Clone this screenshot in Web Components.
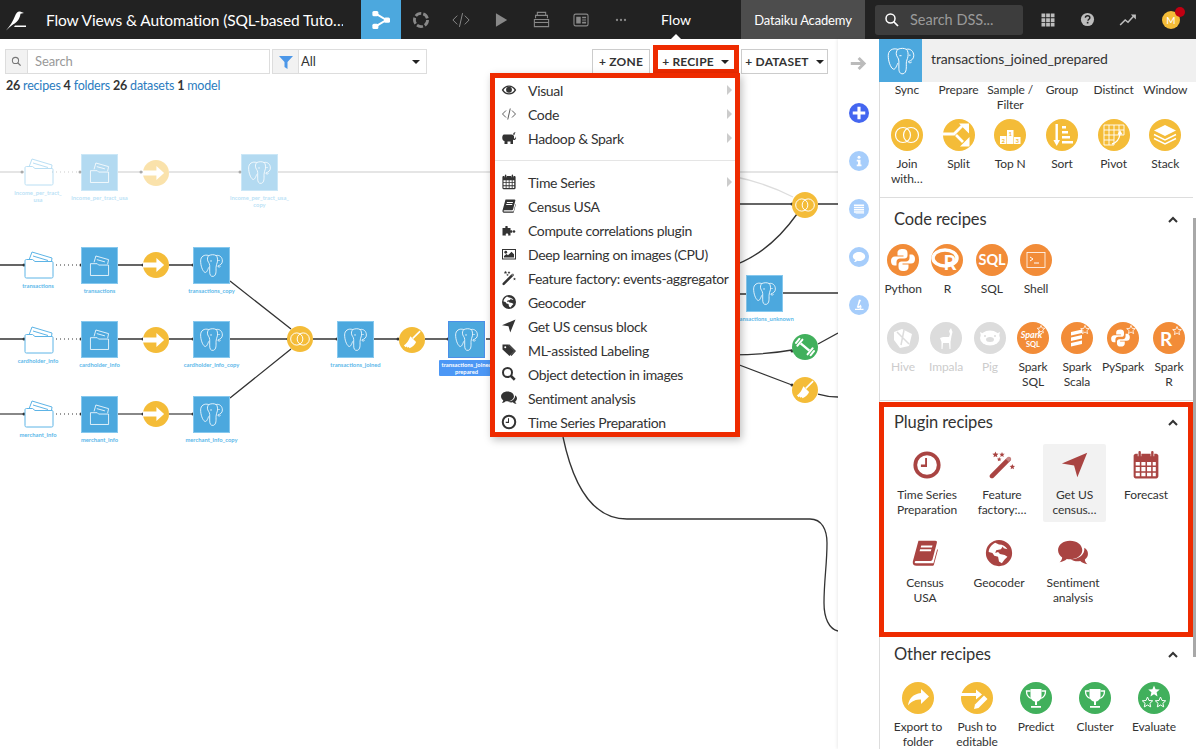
<!DOCTYPE html>
<html lang="en">
<head>
<meta charset="UTF-8">
<title>Flow Views & Automation</title>
<style>
  html, body { margin: 0; height: 100%; overflow: hidden; background: #fff; }
  body { font: 13px Lato, "Liberation Sans", sans-serif; color: #333; }
</style>
</head>
<body>
<dss-app>
  <dss-navbar slot="nav"></dss-navbar>
  <flow-view slot="flow">
    <flow-canvas>
      <flow-node kind="folder" x="24" y="157" label="income_per_tract_&#10;usa" faded></flow-node>
      <flow-node kind="dataset" icon="folder" x="81" y="154" label="income_per_tract_usa" faded></flow-node>
      <flow-node kind="recipe" icon="sync" bg="#f4bc38" x="143" y="160" faded></flow-node>
      <flow-node kind="dataset" icon="pg" x="241" y="154" label="income_per_tract_usa_&#10;copy" faded></flow-node>

      <flow-node kind="folder" x="24" y="250" label="transactions"></flow-node>
      <flow-node kind="dataset" icon="folder" x="81" y="247" label="transactions"></flow-node>
      <flow-node kind="recipe" icon="sync" bg="#f4bc38" x="143" y="252"></flow-node>
      <flow-node kind="dataset" icon="pg" x="193" y="247" label="transactions_copy"></flow-node>

      <flow-node kind="folder" x="24" y="325" label="cardholder_info"></flow-node>
      <flow-node kind="dataset" icon="folder" x="81" y="321" label="cardholder_info"></flow-node>
      <flow-node kind="recipe" icon="sync" bg="#f4bc38" x="143" y="327"></flow-node>
      <flow-node kind="dataset" icon="pg" x="193" y="321" label="cardholder_info_copy"></flow-node>

      <flow-node kind="folder" x="24" y="399" label="merchant_info"></flow-node>
      <flow-node kind="dataset" icon="folder" x="81" y="396" label="merchant_info"></flow-node>
      <flow-node kind="recipe" icon="sync" bg="#f4bc38" x="143" y="401"></flow-node>
      <flow-node kind="dataset" icon="pg" x="193" y="396" label="merchant_info_copy"></flow-node>

      <flow-node kind="recipe" icon="join" bg="#f4bc38" x="287" y="326"></flow-node>
      <flow-node kind="dataset" icon="pg" x="337" y="321" label="transactions_joined"></flow-node>
      <flow-node kind="recipe" icon="brush" bg="#f4bc38" x="399" y="327"></flow-node>
      <flow-node kind="dataset" icon="pg" x="448" y="321" label="transactions_joined_&#10;prepared" selected></flow-node>

      <flow-node kind="recipe" icon="join" bg="#f4bc38" x="792" y="192"></flow-node>
      <flow-node kind="dataset" icon="pg" x="746" y="275" label="transactions_unknown"></flow-node>
      <flow-node kind="recipe" icon="barbell" bg="#41b05c" x="792" y="334"></flow-node>
      <flow-node kind="recipe" icon="brush" bg="#f4bc38" x="792" y="377"></flow-node>
    </flow-canvas>

    <flow-toolbar></flow-toolbar>
    <flow-counts></flow-counts>

    <recipe-menu>
      <menu-item icon="eye" more>Visual</menu-item>
      <menu-item icon="code" more>Code</menu-item>
      <menu-item icon="elephant" more>Hadoop &amp; Spark</menu-item>
      <menu-sep></menu-sep>
      <menu-item icon="calendar" more>Time Series</menu-item>
      <menu-item icon="book">Census USA</menu-item>
      <menu-item icon="puzzle">Compute correlations plugin</menu-item>
      <menu-item icon="image">Deep learning on images (CPU)</menu-item>
      <menu-item icon="wand">Feature factory: events-aggregator</menu-item>
      <menu-item icon="globe">Geocoder</menu-item>
      <menu-item icon="nav">Get US census block</menu-item>
      <menu-item icon="tags">ML-assisted Labeling</menu-item>
      <menu-item icon="search">Object detection in images</menu-item>
      <menu-item icon="comments">Sentiment analysis</menu-item>
      <menu-item icon="clock">Time Series Preparation</menu-item>
    </recipe-menu>
  </flow-view>

  <side-rail slot="rail"></side-rail>

  <side-panel slot="panel" title="transactions_joined_prepared">
    <tile-row pad="1">
      <recipe-tile w="51.7">Sync</recipe-tile>
      <recipe-tile w="51.7">Prepare</recipe-tile>
      <recipe-tile w="51.7">Sample /<br>Filter</recipe-tile>
      <recipe-tile w="51.7">Group</recipe-tile>
      <recipe-tile w="51.7">Distinct</recipe-tile>
      <recipe-tile w="51.7">Window</recipe-tile>
    </tile-row>
    <tile-row pad="1" top="7" bottom="11">
      <recipe-tile w="51.7"><dss-icon slot="icon" name="join" bg="#f4bc38" size="32"></dss-icon>Join<br>with…</recipe-tile>
      <recipe-tile w="51.7"><dss-icon slot="icon" name="split" bg="#f4bc38" size="32"></dss-icon>Split</recipe-tile>
      <recipe-tile w="51.7"><dss-icon slot="icon" name="topn" bg="#f4bc38" size="32"></dss-icon>Top N</recipe-tile>
      <recipe-tile w="51.7"><dss-icon slot="icon" name="sort" bg="#f4bc38" size="32"></dss-icon>Sort</recipe-tile>
      <recipe-tile w="51.7"><dss-icon slot="icon" name="pivot" bg="#f4bc38" size="32"></dss-icon>Pivot</recipe-tile>
      <recipe-tile w="51.7"><dss-icon slot="icon" name="stack" bg="#f4bc38" size="32"></dss-icon>Stack</recipe-tile>
    </tile-row>

    <panel-section heading="Code recipes" gap="14">
      <tile-row pad="1">
        <recipe-tile w="44.3"><dss-icon slot="icon" name="python" bg="#f28c38" size="32"></dss-icon>Python</recipe-tile>
        <recipe-tile w="44.3"><dss-icon slot="icon" name="r" bg="#f28c38" size="32"></dss-icon>R</recipe-tile>
        <recipe-tile w="44.3"><dss-icon slot="icon" name="sql" bg="#f28c38" size="32"></dss-icon>SQL</recipe-tile>
        <recipe-tile w="44.3"><dss-icon slot="icon" name="shell" bg="#f28c38" size="32"></dss-icon>Shell</recipe-tile>
      </tile-row>
      <tile-row pad="1" top="26" bottom="11">
        <recipe-tile w="44" off><dss-icon slot="icon" name="hive" bg="#dcdcdc" size="32"></dss-icon>Hive</recipe-tile>
        <recipe-tile w="42" off><dss-icon slot="icon" name="impala" bg="#dcdcdc" size="32"></dss-icon>Impala</recipe-tile>
        <recipe-tile w="46" off><dss-icon slot="icon" name="pig" bg="#dcdcdc" size="32"></dss-icon>Pig</recipe-tile>
        <recipe-tile w="40"><dss-icon slot="icon" name="sparksql" bg="#f28c38" size="32"></dss-icon>Spark<br>SQL</recipe-tile>
        <recipe-tile w="48"><dss-icon slot="icon" name="scala" bg="#f28c38" size="32"></dss-icon>Spark<br>Scala</recipe-tile>
        <recipe-tile w="44"><dss-icon slot="icon" name="pyspark" bg="#f28c38" size="32"></dss-icon>PySpark</recipe-tile>
        <recipe-tile w="48"><dss-icon slot="icon" name="sparkr" bg="#f28c38" size="32"></dss-icon>Spark<br>R</recipe-tile>
      </tile-row>
    </panel-section>

    <panel-section heading="Plugin recipes" gap="11" framed>
      <tile-row pad="15.5">
        <recipe-tile w="63" plugin><dss-icon slot="icon" name="clock" color="#a94442" size="30"></dss-icon>Time Series<br>Preparation</recipe-tile>
        <recipe-tile w="63" ml="12" plugin><dss-icon slot="icon" name="wand" color="#a94442" size="30"></dss-icon>Feature<br>factory:…</recipe-tile>
        <recipe-tile w="63" ml="9.5" plugin hover><dss-icon slot="icon" name="nav" color="#a94442" size="30"></dss-icon>Get US<br>census…</recipe-tile>
        <recipe-tile w="63" ml="8.5" plugin><dss-icon slot="icon" name="calendar" color="#a94442" size="30"></dss-icon>Forecast</recipe-tile>
      </tile-row>
      <tile-row pad="13.5" top="10" bottom="22">
        <recipe-tile w="63" plugin><dss-icon slot="icon" name="book" color="#a94442" size="30"></dss-icon>Census<br>USA</recipe-tile>
        <recipe-tile w="63" ml="11" plugin><dss-icon slot="icon" name="globe" color="#a94442" size="30"></dss-icon>Geocoder</recipe-tile>
        <recipe-tile w="63" ml="11" plugin><dss-icon slot="icon" name="comments" color="#a94442" size="30"></dss-icon>Sentiment<br>analysis</recipe-tile>
      </tile-row>
    </panel-section>

    <panel-section heading="Other recipes" gap="17" borderless>
      <tile-row pad="8.5">
        <recipe-tile w="59"><dss-icon slot="icon" name="export" bg="#f4bc38" size="32"></dss-icon>Export to<br>folder</recipe-tile>
        <recipe-tile w="59"><dss-icon slot="icon" name="push" bg="#f4bc38" size="32"></dss-icon>Push to<br>editable</recipe-tile>
        <recipe-tile w="59"><dss-icon slot="icon" name="trophy" bg="#41b05c" size="32"></dss-icon>Predict</recipe-tile>
        <recipe-tile w="59"><dss-icon slot="icon" name="trophy" bg="#41b05c" size="32"></dss-icon>Cluster</recipe-tile>
        <recipe-tile w="59"><dss-icon slot="icon" name="evaluate" bg="#41b05c" size="32"></dss-icon>Evaluate</recipe-tile>
      </tile-row>
    </panel-section>
  </side-panel>
</dss-app>

<script>
  // all glyphs live on a 32x32 box and paint with currentColor
  const star = (cx, cy, r) => {
    let pts = [];
    for (let i = 0; i < 10; i++) {
      const a = -Math.PI / 2 + i * Math.PI / 5, d = i % 2 ? r * 0.45 : r;
      pts.push((cx + d * Math.cos(a)).toFixed(1) + "," + (cy + d * Math.sin(a)).toFixed(1));
    }
    return pts.join(" ");
  };
  const grow = inner => `<g transform="translate(16 16) scale(1.1) translate(-16 -16)">${inner}</g>`;
  const snake = `M16 5c-4 0-5.500 1.500-5.500 4v2.500h6v1H8C5.500 12.500 4 14 4 17s1.500 4.500 3.500 4.500h2V18c0-2 1.500-3.500 3.500-3.500h4.500c1.700 0 3-1.300 3-3V9c0-2.500-1.500-4-4.500-4z`;
  const python = `<path d="${snake}"/><path d="${snake}" transform="rotate(180 16 16)"/>`;
  const trophy = `<path d="M10.500 7h11v7c0 3.500-2.500 5.500-5.500 5.500s-5.500-2-5.500-5.500z"/><path d="M10.500 9H6.500c0 4 1.500 6.500 5 7.500M21.500 9h4c0 4-1.500 6.500-5 7.500" fill="none" stroke="currentColor" stroke-width="1.300"/><path d="M15 19h2v4h-2zM11 24h10v1.800H11z"/>`;
  const brush = `<path d="M17 14L26 5" stroke="currentColor" stroke-width="2" fill="none"/><path d="M14 11.500l7 7c-1 3-4 6-8 7.500l-1-1.500-1.500 1-1-1.500-1.500 1L6 22.500c3-1 6-6 8-11z"/>`;

  const ICONS = {
    pg: `<g fill="none" stroke="currentColor" stroke-width=".9" stroke-linejoin="round"><path d="M13 5C8 3.500 4 6 4 11c0 5 2 11 4.500 12.500 2 1 3-2 4.500-5.500"/><path d="M13 5c3-1.200 6-1.200 8 0 1.500 1 2 4 1.500 7-.5 2.500-1.500 3.500-1.500 6 0 4 .5 9-3 10-3 .5-4-2-4-5v-7c0-3-2.500-4-2.500-7 0-2 1-3.500 1.500-4"/><path d="M21 5c4-1 7 2 7 6 0 3-2 4.500-5 5.500 0 1.500 2 1.500 3 .5"/><path d="M14.500 11h2M23.500 10.500h1.500"/></g>`,
    folder: `<g fill="none" stroke="currentColor" stroke-width=".9" stroke-linejoin="round"><path d="M6 14h7.500l1.500 1.500h11v11.500H6z"/><path d="M10 12.500l2-7 14 4-1 5M13 9.500l9 2.500"/></g>`,
    sync: `<path d="M0 13h16.500V7.500L26 16l-9.500 8.500V19H0z"/>`,
    join: `<g fill="none" stroke="currentColor" stroke-width="1.200"><circle cx="12" cy="16" r="7.500"/><circle cx="20" cy="16" r="7.500"/></g>`,
    brush,
    barbell: `<g transform="rotate(40 16 16)"><path d="M9 14.500h14v3H9z"/><rect x="6.500" y="10" width="2.500" height="12" rx="1"/><rect x="3" y="11.500" width="2.500" height="9" rx="1"/><rect x="23" y="10" width="2.500" height="12" rx="1"/><rect x="26.500" y="11.500" width="2.500" height="9" rx="1"/></g>`,
    split: `<g fill="none" stroke="currentColor" stroke-width="2.800"><path d="M0 15h11l8-8M13 16l7 7"/></g><path d="M16 4.500h10v10zM17 27.500h9.500v-9.500z"/>`,
    topn: `<path d="M6 17h6.500v8H6zM13 11h6.500v14H13zM20 18h6.500v7H20z"/><g fill="#f4bc38" font-size="6" font-weight="700" font-family="Lato,sans-serif" text-anchor="middle"><text x="9.200" y="23.500">2</text><text x="16.200" y="17">1</text><text x="23.200" y="24">3</text></g>`,
    sort: `<path d="M9.500 5h2.400v16H14l-3.300 6-3.300-6h2.100zM16 7h4v2.500h-4zM16 12h6v2.500h-6zM16 17h8v2.500h-8zM16 22h11v2.500H16z"/>`,
    pivot: `<g fill="none" stroke="currentColor" stroke-width=".9"><path d="M6 6h20v10H16v10H6zM6 11h20M6 16h10M6 21h10M11 6v20M16 6v10M21 6v10"/></g><path d="M14 25c4-1 7-4 8-10" fill="none" stroke="currentColor" stroke-width="1.300"/><path d="M22 11l2.500 4.500h-5z"/>`,
    stack: `<path d="M16 6l11 5.500-11 5.500-11-5.500z"/><path d="M5 15.500l11 5.500 11-5.500M5 19.500l11 5.500 11-5.500" fill="none" stroke="currentColor" stroke-width="1.500"/>`,
    python,
    r: `<ellipse cx="14" cy="14" rx="12" ry="8" fill="none" stroke="currentColor" stroke-width="3.500"/><text x="19" y="26" font-size="20" font-weight="700" text-anchor="middle" font-family="Lato,sans-serif">R</text>`,
    sql: `<text x="16" y="21" font-size="14.500" font-weight="700" text-anchor="middle" font-family="Lato,sans-serif">SQL</text>`,
    shell: `<rect x="7" y="8.500" width="18" height="15" fill="none" stroke="currentColor" stroke-width=".8"/><path d="M10 13l3 2-3 2M14 19h5" fill="none" stroke="currentColor" stroke-width="1"/>`,
    hive: `<path d="M7 10l8-3 10 5-3 12-9 2-6-8z"/><path d="M10 10l12 12M17 8l-3 15" stroke="#dcdcdc" stroke-width="1.500" fill="none"/>`,
    impala: `<path d="M21 6l1.500 4-1 4-1 6 0 7h-1l-.5-6h-6l-.5 6h-1l0-7-1.500-4 3-1h6l1-3-1-3z"/>`,
    pig: `<ellipse cx="16" cy="16" rx="10" ry="7.500"/><path d="M6 10l4 2-3 2zM26 10l-4 2 3 2z"/><ellipse cx="16" cy="17.500" rx="4" ry="2.500" fill="#dcdcdc"/><circle cx="11" cy="14" r="1" fill="#dcdcdc"/><circle cx="21" cy="14" r="1" fill="#dcdcdc"/>`,
    sparksql: `<text x="14.500" y="15.500" font-size="9" font-style="italic" font-weight="700" text-anchor="middle" font-family="Lato,sans-serif">Spark</text><text x="16" y="25" font-size="7.500" font-weight="700" text-anchor="middle" font-family="Lato,sans-serif">SQL</text><polygon points="${star(24, 7.5, 4)}" fill="none" stroke="currentColor" stroke-width=".8"/>`,
    scala: `<path d="M10 10l11-2.500v3.500l-11 2.500zM10 15.500l11-2.500v3.500l-11 2.500zM10 21l11-2.500V22l-11 2.500z"/><polygon points="${star(24, 8, 4.500)}" fill="none" stroke="currentColor" stroke-width=".8"/>`,
    pyspark: `<g transform="translate(1 3.500) scale(.78)">${python}</g><polygon points="${star(24, 8, 4.500)}" fill="none" stroke="currentColor" stroke-width=".8"/>`,
    sparkr: `<text x="13" y="24" font-size="19" font-weight="700" text-anchor="middle" font-family="Lato,sans-serif">R</text><polygon points="${star(24, 9, 4.500)}" fill="none" stroke="currentColor" stroke-width=".8"/>`,
    export: `<path d="M19 7l8 7.500-8 7.500v-4.500c-5 0-9 1-13 6 1-7 5-11.500 13-12.500z"/>`,
    push: `<path d="M0 11h15V7.500l6 5-6 5V14H0z"/><path d="M23 13.500l3.500 3.500-9 9-4.500 1 1-4.500z"/>`,
    trophy,
    evaluate: `<polygon points="${star(16, 9.500, 6)}"/><polygon points="${star(9.500, 20.500, 5.500)}" fill="none" stroke="currentColor" stroke-width="1"/><polygon points="${star(22.500, 20.500, 5.500)}" fill="none" stroke="currentColor" stroke-width="1"/>`,
    // navbar
    flow: `<path d="M9 7.500l14 8.500-14 8.500" fill="none" stroke="currentColor" stroke-width="2.600"/><rect x="4.500" y="4" width="8" height="7" rx="2"/><rect x="4.500" y="21" width="8" height="7" rx="2"/><rect x="20" y="12.500" width="8" height="7" rx="2"/>`,
    ring: `<circle cx="16" cy="16" r="10.500" fill="none" stroke="currentColor" stroke-width="4.500" stroke-dasharray="10 3.200"/>`,
    code: `<path d="M10 9l-7 7 7 7M22 9l7 7-7 7M18.500 5l-5 22" fill="none" stroke="currentColor" stroke-width="1.600"/>`,
    play: `<path d="M7 4l20 12-20 12z"/>`,
    jobs: `<g fill="none" stroke="currentColor" stroke-width="1.800"><path d="M9 8V4h14v4M6 14V9h20v5M4 28V16h24v12z"/><path d="M4 21h24"/></g>`,
    card: `<rect x="3.500" y="5.500" width="25" height="21" rx="3" fill="none" stroke="currentColor" stroke-width="2"/><path d="M7.500 10h8v12h-8zM18 10h7v3h-7zM18 15h7v2h-7zM18 19h7v3h-7z"/>`,
    dots: `<circle cx="8" cy="16" r="2.300"/><circle cx="16" cy="16" r="2.300"/><circle cx="24" cy="16" r="2.300"/>`,
    loupe: `<circle cx="13" cy="13" r="9" fill="none" stroke="currentColor" stroke-width="3"/><path d="M19.500 19.500L28 28" stroke="currentColor" stroke-width="3.500"/>`,
    grid: `<path d="M3 3h7.500v7.500H3zM12.300 3h7.500v7.500h-7.500zM21.500 3H29v7.500h-7.500zM3 12.300h7.500v7.500H3zM12.300 12.300h7.500v7.500h-7.500zM21.500 12.300H29v7.500h-7.500zM3 21.500h7.500V29H3zM12.300 21.500h7.500V29h-7.500zM21.500 21.500H29V29h-7.500z"/>`,
    help: `<circle cx="16" cy="16" r="14"/><path d="M11.500 12.500c0-3 2-4.500 4.800-4.500 3 0 4.700 1.800 4.700 4 0 3.500-4 3.500-4 6.500" fill="none" stroke="#222" stroke-width="3"/><rect x="14.500" y="21" width="3.500" height="3.500" fill="#222"/>`,
    trend: `<path d="M2 25l9-9 5 4 11-12" fill="none" stroke="currentColor" stroke-width="2.800"/><path d="M21 6h9v9z"/>`,
    arrow: `<path d="M18 5l11 11-11 11-3.500-3.500 5-5H3v-5h16.500l-5-5z"/>`,
    plus: `<path d="M13.500 6h5v7.500H26v5h-7.500V26h-5v-7.500H6v-5h7.500z"/>`,
    info: `<circle cx="16" cy="8.500" r="3"/><path d="M11.500 13.500h7.500V23h2v3.500H11.500V23h2.500v-6h-2.500z"/>`,
    list: `<path d="M7 8h18v2.500H7zM7 12h18v2.500H7zM7 16h18v2.500H7zM7 20h18v2.500H7zM10 24h15v1H10z"/>`,
    bubble: `<path d="M16 7c6 0 11 3.500 11 8s-5 8-11 8c-1 0-2 0-3-.3-1.500 1.300-3.500 2.300-6 2.300 1.500-1.300 2.300-2.700 2.500-4C7 19.500 5 17.500 5 15c0-4.500 5-8 11-8z"/>`,
    flask: `<path d="M16 5l4 1-5 12c2 .5 3-1 3.500-3 3 2 3.500 6 1 8.500H25V26H8v-2.500h8c2.500 0 3-1.500 2.500-3-2 1.500-5 2-6.500.5-1-1 0-2 .5-3z"/>`,
    // menu and plugin glyphs
    eye: `<path fill-rule="evenodd" d="M1.500 16C5 10 10 7 16 7s11 3 14.500 9C27 22 22 25 16 25S5 22 1.500 16zm3.500 0c3 4.300 6.500 6.500 11 6.500S24 20.300 27 16c-3-4.300-6.500-6.500-11-6.500S8 11.700 5 16z"/><circle cx="16" cy="15.500" r="5.800"/>`,
    elephant: `<path d="M6 9h15c3 0 5 2 5 4v3c0 2 2 2 3 0 .5-1-.5-2 0-3 1 1 1.500 2.500 1 4-1 3-4 4-6 2v9h-5v-5h-6v5H7v-6C4 22 2.500 19 2.500 15 2.500 12 4 9.500 6 9z"/><path d="M24 9c1-3 3-5 5-4-1 1-2 2-2 5z"/>`,
    calendar: grow(`<path fill-rule="evenodd" d="M4 7c0-1 1-2 2-2h2v2.500h3.500V5h9v2.500H24V5h2c1 0 2 1 2 2v20c0 1-1 2-2 2H6c-1 0-2-1-2-2zm2 6v3.500h4V13zm5.500 0v3.500h4V13zm5.500 0v3.500h4V13zm5.500 0v3.500h3V13zM6 18v4h4v-4zm5.500 0v4h4v-4zm5.500 0v4h4v-4zm5.500 0v4h3v-4zM6 23.500V27h4v-3.500zm5.500 0V27h4v-3.500zm5.500 0V27h4v-3.500zm5.500 0V27h3v-3.500z"/><rect x="8.700" y="2.500" width="2.300" height="6.500" rx="1"/><rect x="21" y="2.500" width="2.300" height="6.500" rx="1"/>`),
    book: `<path fill-rule="evenodd" d="M9 3h18c1.500 0 2 1 1.600 2.300L24 23c-.4 1-1 1.500-2 1.500H7c-1.300 0-2 .5-2 1.300S5.700 27 7 27h18l4-15 .8.500-4.300 16c-.2.800-.8 1.200-1.500 1.200H7c-3 0-4.500-2-4-4.700zm3 5l-.6 2h12l.6-2zm-1.200 4l-.6 2h12l.6-2z"/>`,
    puzzle: `<path d="M3 12h6c-1-1.500-1-4 2-4s3 2.500 2 4h6v5c1.500-1 4-1 4 2s-2.500 3-4 2v6h-5c1-1.500 1-4-2-4s-3 2.500-2 4H3z"/><circle cx="26" cy="19" r="2.500"/>`,
    image: `<path fill-rule="evenodd" d="M2 6h28v21H2zm2 2v17h24V8z"/><circle cx="9.500" cy="12.500" r="2.800"/><path d="M6 23v-3l5-4 3 2.500 7-7 5 5V23z"/>`,
    wand: `<path d="M3.500 26l18-18c1-1 2.500-1 3.500 0s1 2.500 0 3.500l-18 18c-1 1-2.500 1-3.500 0s-1-2.500 0-3.500z"/><path d="M20 9.500l3-3 3 3-3 3z" fill="#fff" opacity=".35"/><polygon points="${star(9, 5, 3.500)}"/><polygon points="${star(16, 5, 3)}"/><polygon points="${star(27, 18, 3)}"/><polygon points="${star(13, 10, 2.500)}"/>`,
    globe: `<path fill-rule="evenodd" d="M16 2a14 14 0 1 1 0 28 14 14 0 0 1 0-28zm-4 3C8 7 5 11 5 15l4 1 2 3 4 1 1 5 3 2 3-4 3-3-3-2-5-1-2-2-3 1 1-3 5-1 2-3 1 2 4 1c-2-3-5-5-9-5z"/>`,
    nav: `<path d="M29 3L2 14.500l13 2L18.500 29z"/>`,
    tags: `<path d="M3 5h11l13 13-10 10L3 15z"/><circle cx="8.500" cy="10.500" r="2" fill="#fff"/><path d="M17 5l13 13-9 10-2-2 8-8L14 5z"/>`,
    search: `<circle cx="13" cy="13" r="9" fill="none" stroke="currentColor" stroke-width="4"/><path d="M19.500 19.500L27.500 27.500" stroke="currentColor" stroke-width="5"/>`,
    comments: grow(`<path d="M13 4c7 0 12 4 12 9s-5 9-12 9c-1 0-2 0-3-.2C8 23.500 6 24.500 3 25c1.500-1.500 2.500-3 2.500-4.700C3 18.500 1.500 16 1.500 13 1.500 8 6.500 4 13 4z"/><path d="M27 11c2.500 1.500 3.500 3.500 3.500 6 0 2-1 4-3 5.300 0 1.700 1 3.200 2.500 4.700-3-.5-5-1.500-7-3.200-3.500.7-7-.2-9.500-1.800 8 .5 14-4 13.500-11z"/>`),
    clock: `<circle cx="16" cy="16" r="12.500" fill="none" stroke="currentColor" stroke-width="4"/><path d="M16 8.500V18h-6.500v-2.500H14V8.500z"/>`
  };

  const define = (name, css, html) => {
    customElements.define(name, class extends HTMLElement {
      connectedCallback() {
        if (this.shadowRoot) return;
        const root = this.attachShadow({ mode: "open" });
        const body = typeof html == "function" ? html(this) : html;
        const style = typeof css == "function" ? css(this) : css;
        root.innerHTML = `<style>${style}</style>${body}`;
      }
    });
  };
  const attr = (el, name, dflt) => el.hasAttribute(name) ? el.getAttribute(name) : dflt;

  define("dss-icon",
    el => `:host{display:block;flex:none;width:${attr(el, "size", 16)}px;height:${attr(el, "size", 16)}px;color:${attr(el, "color", attr(el, "bg", "") ? "#fff" : "currentColor")}}
           svg{display:block;width:100%;height:100%;fill:currentColor;overflow:hidden}`,
    el => `<svg viewBox="0 0 32 32">${el.hasAttribute("bg") ? `<circle cx="16" cy="16" r="16" fill="${el.getAttribute("bg")}"/>` : ""}${ICONS[el.getAttribute("name")] || ""}</svg>`);

  define("dss-app",
    `:host{display:grid;grid-template:39px 710px / 838px 41px 317px;width:1196px;height:749px;overflow:hidden}
     ::slotted([slot=nav]){grid-column:1 / -1}`,
    `<slot name="nav"></slot><slot name="flow"></slot><slot name="rail"></slot><slot name="panel"></slot>`);

  define("dss-navbar",
    `:host{display:flex;align-items:center;height:39px;background:#222;color:#fff}
     .logo{width:46px;display:flex;justify-content:flex-start;padding-left:5px;box-sizing:border-box}
     .title{width:297px;margin-right:18px;font-size:15.500px;white-space:nowrap;overflow:hidden;letter-spacing:-.12px}
     .tab{width:40px;height:39px;display:flex;align-items:center;justify-content:center;color:#888}
     .tab.on{background:#4ca8de;color:#fff}
     .flow{width:70px;height:39px;display:flex;align-items:center;justify-content:center;font-size:14px;position:relative}
     .flow::after{content:"";position:absolute;left:30px;bottom:0;border:5px solid transparent;border-top:0;border-bottom-color:#fff}
     .academy{margin-left:30px;width:124px;height:39px;background:#4d4d4d;display:flex;align-items:center;justify-content:center;font-size:13px;letter-spacing:-.15px}
     .search{margin-left:10px;width:148px;height:30px;background:#3d3d3d;border-radius:3px;display:flex;align-items:center;gap:10px;padding-left:9px;box-sizing:border-box;color:#fff;font-size:14.500px}
     .search span{color:#9a9a9a}
     .right{display:flex;align-items:center;color:#bdbdbd}
     .avatar{position:relative;width:18px;height:18px;border-radius:50%;background:#f4bc38;margin-left:25px;color:#fff;font-size:10px;display:flex;align-items:center;justify-content:center}
     .avatar::after{content:"";position:absolute;width:10px;height:10px;border-radius:50%;background:#c00012;top:-4px;right:-5px}`,
    `<div class="logo"><svg width="24" height="24" viewBox="0 0 24 24" fill="#fff"><path d="M1 22.500C5 18 8 13 10 8c1-3 3-5 5-4.500l4 1.500-3.500.8C15 10 13 14 8 16.500 6 18 3 20.500 1 22.500z"/><path d="M10 17.500h11V19H9z"/></svg></div>
     <div class="title">Flow Views &amp; Automation (SQL-based Tuto…</div>
     <div class="tab on"><dss-icon name="flow" size="24"></dss-icon></div>
     <div class="tab"><dss-icon name="ring" size="20"></dss-icon></div>
     <div class="tab"><dss-icon name="code" size="20"></dss-icon></div>
     <div class="tab"><dss-icon name="play" size="18"></dss-icon></div>
     <div class="tab"><dss-icon name="jobs" size="19"></dss-icon></div>
     <div class="tab"><dss-icon name="card" size="18"></dss-icon></div>
     <div class="tab"><dss-icon name="dots" size="16"></dss-icon></div>
     <div class="flow">Flow</div>
     <div class="academy">Dataiku Academy</div>
     <div class="search"><dss-icon name="loupe" size="16"></dss-icon><span>Search DSS...</span></div>
     <div class="right">
       <dss-icon name="grid" size="16" style="margin-left:17px"></dss-icon>
       <dss-icon name="help" size="15" style="margin-left:24px"></dss-icon>
       <dss-icon name="trend" size="18" style="margin-left:24px"></dss-icon>
       <div class="avatar">M</div>
     </div>`);

  define("flow-view",
    `:host{display:block;position:relative;overflow:hidden;background:#fff}`,
    `<slot></slot>`);

  define("flow-toolbar",
    `:host{display:flex;position:relative;align-items:center;padding:10px 10px 0 5px;height:25px;font-size:13px}
     .grp{display:flex;height:25px;box-sizing:border-box;border:1px solid #ddd;background:#fff}
     .add{width:21px;background:#f2f2f2;border-right:1px solid #ddd;display:flex;align-items:center;justify-content:center;flex:none}
     .grp.a{width:265px}
     .grp.b{width:155px;margin-left:2px}
     .grp.b .add{width:25px}
     .val{flex:1;padding-left:7px;line-height:23px;color:#999;letter-spacing:-.1px}
     .b .val{color:#333;padding-left:2px}
     .caret{width:0;height:0;border:4px solid transparent;border-top:4px solid #222;border-bottom:0}
     .b .caret{align-self:center;margin-right:6px}
     .btn{position:relative;height:25px;box-sizing:border-box;border:1px solid #ccc;background:#fff;display:flex;align-items:center;justify-content:center;gap:7px;font-size:12px;font-weight:700;color:#333;letter-spacing:.2px}
     .frame{position:absolute;left:-3px;right:-4px;top:-5px;bottom:-1px;border:5px solid #ee2b00}`,
    `<div class="grp a"><div class="add"><dss-icon name="loupe" size="11" color="#777"></dss-icon></div><div class="val">Search</div></div>
     <div class="grp b"><div class="add"><svg width="14" height="14" viewBox="0 0 14 14" fill="#4c97e8"><path d="M0 1h14L8.500 7v7l-3-2V7z"/></svg></div><div class="val">All</div><div class="caret"></div></div>
     <div class="btn" style="width:58px;margin-left:165px">+ ZONE</div>
     <div class="btn" style="width:81px;margin-left:5px">+ RECIPE <span class="caret"></span><div class="frame"></div></div>
     <div class="btn" style="width:87px;margin-left:5px">+ DATASET <span class="caret"></span></div>`);

  define("flow-counts",
    `:host{display:block;position:relative;padding:3px 0 0 6px;font-size:12.500px;line-height:18px;color:#2b7cc0;letter-spacing:-.2px}
     b{color:#333}`,
    `<b>26</b> recipes <b>4</b> folders <b>26</b> datasets <b>1</b> model`);

  // the graph: edges sit in one svg, nodes are placed on top of it
  define("flow-canvas",
    `:host{position:absolute;inset:0;display:block}
     svg{position:absolute;left:0;top:0}`,
    `<svg width="838" height="710" viewBox="0 39 838 710" fill="none" stroke="#333" stroke-width="1.300">
       <g stroke="#ddd">
         <path d="M0 172H24M118 172H143M169 172H241M278 172H838"/>
         <path d="M700 172C740 175 770 185 793 197"/>
       </g>
       <path d="M52 172H81" stroke="#ddd" stroke-dasharray="1 3"/>
       <path d="M0 265H24M118 265H143M169 265H193M0 339H24M118 339H143M169 339H193M230 339H287M313 339H337M374 339H399M425 339H448M486 339H500"/>
       <path d="M52 265H81M52 339H81M52 414H81" stroke-dasharray="1 3" stroke="#777"/>
       <path d="M0 414H24M118 414H143M169 414H193" stroke="#888" stroke-width="2"/>
       <path d="M230 281L291 329M230 398L291 349"/>
       <path d="M700 204H792M818 204H838"/>
       <path d="M700 272C745 270 775 245 797 214"/>
       <path d="M700 294H746M783 293H838"/>
       <path d="M700 354C740 356 770 354 792 350M818 344L838 333"/>
       <path d="M700 350L792 385M818 394C825 396 830 397 838 397"/>
       <path d="M563 437C572 480 590 519 627 519H810C822 519 827 530 827 543C827 565 824 580 824 603C824 618 829 629 838 631"/>
       <g fill="#333" stroke="none">
         <circle cx="24" cy="265" r="1.500"/><circle cx="81" cy="265" r="1.500"/><circle cx="143" cy="265" r="1.500"/><circle cx="193" cy="265" r="1.500"/>
         <circle cx="24" cy="339" r="1.500"/><circle cx="81" cy="339" r="1.500"/><circle cx="143" cy="339" r="1.500"/><circle cx="193" cy="339" r="1.500"/>
         <circle cx="24" cy="414" r="1.500"/><circle cx="81" cy="414" r="1.500"/><circle cx="143" cy="414" r="1.500"/><circle cx="193" cy="414" r="1.500"/>
         <circle cx="288" cy="339" r="1.500"/><circle cx="337" cy="339" r="1.500"/><circle cx="398" cy="339" r="1.500"/><circle cx="448" cy="339" r="1.500"/>
         <circle cx="792" cy="204" r="1.500"/><circle cx="792" cy="351" r="1.500"/><circle cx="792" cy="385" r="1.500"/>
       </g>
       <g fill="#aaa" stroke="none">
         <circle cx="22" cy="172" r="1.500"/><circle cx="80" cy="172" r="1.500"/><circle cx="141" cy="172" r="1.500"/><circle cx="240" cy="172" r="1.500"/>
       </g>
     </svg><slot></slot>`);

  // x and y are page coordinates, the canvas starts under the 39px navbar
  define("flow-node",
    el => {
      const kind = el.getAttribute("kind");
      const w = kind == "dataset" ? 37 : kind == "recipe" ? 26 : 28;
      return `:host{position:absolute;left:${el.getAttribute("x")}px;top:${el.getAttribute("y") - 39}px;width:${w}px;height:${w}px;${el.hasAttribute("faded") ? "opacity:.42;" : ""}}
        .sq{width:37px;height:37px;box-sizing:border-box;background:#4ca8de;border:1px solid ${el.hasAttribute("selected") ? "#4c8fe8" : "#86c8ee"};color:#fff;display:flex;align-items:center;justify-content:center}
        .label{position:absolute;left:50%;top:${kind == "folder" ? 31 : w + 2}px;transform:translateX(-50%);white-space:pre;text-align:center;font-size:5.800px;line-height:7px;color:#5db8ea;font-weight:700;padding:1px 3px;border-radius:1px}
        :host([selected]) .label{background:#4c97f5;color:#fff;width:50px;top:39px;padding:1px 3px}`;
    },
    el => {
      const kind = el.getAttribute("kind"), label = attr(el, "label", "");
      const icon = el.getAttribute("icon");
      let body;
      if (kind == "dataset") body = `<div class="sq"><dss-icon name="${icon}" size="29"></dss-icon></div>`;
      else if (kind == "recipe") body = `<dss-icon name="${icon}" bg="${el.getAttribute("bg")}" size="26"></dss-icon>`;
      else body = `<svg width="30" height="30" viewBox="0 0 30 30" fill="#fff" stroke="#5db4e6" stroke-width="1" stroke-linejoin="round"><path d="M5 10l3-8 20 6-.5 3.500"/><path d="M9 6l15 4.500"/><path d="M1 11c0-1 .5-1.500 1.500-1.500h6L11 11.500h17c.7 0 1 .5 1 1v14c0 1-.5 1.500-1.500 1.500h-25C1.500 28 1 27.500 1 26.500z"/></svg>`;
      return body + (label ? `<div class="label">${label}</div>` : "");
    });

  define("recipe-menu",
    `:host{position:absolute;left:490px;top:34px;width:250px;height:364px;box-sizing:border-box;border:5px solid #ee2b00;background:#fff;box-shadow:2px 3px 8px rgba(0,0,0,.25);overflow:hidden;display:block}`,
    `<slot></slot>`);

  define("menu-item",
    `:host{display:flex;align-items:center;height:24px;font-size:14px;letter-spacing:-.35px;color:#333;position:relative;white-space:nowrap}
     dss-icon{margin:0 11px 0 6px}
     .more{position:absolute;right:3px;top:7px;border:5px solid transparent;border-left-color:#ccc;border-right:0}`,
    el => `<dss-icon name="${el.getAttribute("icon")}" size="16"></dss-icon><slot></slot>${el.hasAttribute("more") ? `<span class="more"></span>` : ""}`);

  define("menu-sep",
    `:host{display:block;height:1px;background:#e5e5e5;margin:10px 0 9px}`, ``);

  define("side-rail",
    `:host{display:flex;flex-direction:column;align-items:center;position:relative;background:#fff;box-shadow:-1px 0 3px rgba(0,0,0,.08);padding-top:15px;box-sizing:border-box}
     .dot{width:20px;height:20px;border-radius:50%;background:#a6cdfb;color:#fff;margin-top:28px;display:flex;align-items:center;justify-content:center}
     .dot.add{background:#4466f0;margin-top:30px}`,
    `<dss-icon name="arrow" size="19" color="#bbb"></dss-icon>
     <div class="dot add"><dss-icon name="plus" size="20"></dss-icon></div>
     <div class="dot"><dss-icon name="info" size="16"></dss-icon></div>
     <div class="dot"><dss-icon name="list" size="18"></dss-icon></div>
     <div class="dot"><dss-icon name="bubble" size="18"></dss-icon></div>
     <div class="dot"><dss-icon name="flask" size="16"></dss-icon></div>`);

  // padding rather than a border: overflow clips at the padding box and the red frame starts at its edge
  define("side-panel",
    `:host{display:flex;flex-direction:column;position:relative;height:710px;overflow:hidden;background:#fff;box-sizing:border-box;padding-left:1px;box-shadow:inset 1px 0 #ddd;font-size:12px}
     .head{height:43px;flex:none;background:#f0f0f0;display:flex;align-items:center;margin-left:-1px}
     .blue{width:43px;height:43px;background:#4ca8de;color:#fff;display:flex;align-items:center;justify-content:center}
     .name{margin-left:9px;font-size:14px;letter-spacing:-.12px;color:#333;margin-top:-4px}
     .thumb{position:absolute;right:0;top:179px;width:3px;height:439px;background:#a8a8a8}`,
    el => `<div class="head"><div class="blue"><dss-icon name="pg" size="34"></dss-icon></div><div class="name">${el.getAttribute("title")}</div></div>
     <slot></slot><div class="thumb"></div>`);

  define("panel-section",
    el => `:host{display:block;position:relative;box-sizing:border-box;border-top:${el.hasAttribute("borderless") ? 0 : "1px solid #ddd"};margin-right:3px;padding-top:${el.hasAttribute("borderless") ? 11 : 10}px}
     .top{display:flex;align-items:center;justify-content:space-between;height:22px;margin:0 0 ${attr(el, "gap", 14)}px 14px;padding-right:15px}
     h3{margin:0;font-size:16.500px;font-weight:400;letter-spacing:-.1px;color:#333}
     .frame{position:absolute;left:-1px;right:0;top:1px;bottom:-5px;border:5px solid #ee2b00;pointer-events:none}`,
    el => `<div class="top"><h3>${el.getAttribute("heading")}</h3><svg width="10" height="7" viewBox="0 0 10 7" fill="none" stroke="#333" stroke-width="2"><path d="M1 6l4-4 4 4"/></svg></div>
     <slot></slot>${el.hasAttribute("framed") ? `<div class="frame"></div>` : ""}`);

  define("tile-row",
    el => `:host{display:flex;padding:${attr(el, "top", 0)}px 0 ${attr(el, "bottom", 0)}px ${attr(el, "pad", 0)}px}`,
    `<slot></slot>`);

  define("recipe-tile",
    el => {
      const plugin = el.hasAttribute("plugin");
      const gap = !el.querySelector("dss-icon") ? 0 : plugin ? 7 : 5;
      return `:host{display:flex;flex-direction:column;align-items:center;flex:none;box-sizing:border-box;width:${attr(el, "w", 50)}px;margin-left:${attr(el, "ml", 0)}px;text-align:center;font-size:12px;line-height:15px;letter-spacing:-.1px;color:${el.hasAttribute("off") ? "#ccc" : "#333"};white-space:nowrap;
       ${plugin ? "height:78px;padding-top:6px;border-radius:2px;" : ""}${el.hasAttribute("hover") ? "background:#f2f2f2;" : ""}}
     .label{margin-top:${gap}px}`;
    },
    `<slot name="icon"></slot><div class="label"><slot></slot></div>`);
</script>
</body>
</html>
